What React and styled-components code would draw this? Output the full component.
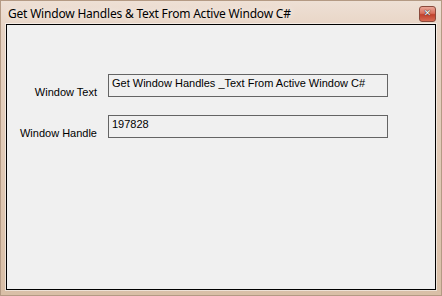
import React from "react";
import styled, { createGlobalStyle } from "styled-components";

const Global = createGlobalStyle`
  html, body { margin: 0; padding: 0; background: #fff; }
`;

const Window = styled.div`
  box-sizing: border-box;
  width: 442px;
  height: 296px;
  display: flex;
  flex-direction: column;
  border: 1px solid #b49a84;
  background: linear-gradient(180deg, #eee0d5 0%, #e7d3c3 30px, #d9bfa7 100%);
  padding: 0 5px 5px;
`;

const TitleBar = styled.div`
  height: 23px;
  display: flex;
  align-items: center;
  justify-content: space-between;
  padding-left: 2px;
`;

const Title = styled.span`
  font-family: "Noto Sans", "Liberation Sans", sans-serif;
  font-size: 12px;
  letter-spacing: -0.2px;
  color: #000;
  text-shadow: 0 0 6px rgba(255, 255, 255, 0.9);
  margin-top: 1px;
`;

const CloseButton = styled.div`
  box-sizing: border-box;
  width: 17px;
  height: 16px;
  margin-top: 2px;
  border: 1px solid #8a4a3c;
  border-radius: 3px;
  background: linear-gradient(180deg, #e9a597 0%, #d9705c 45%, #c0412c 55%, #d66a52 100%);
  display: flex;
  align-items: center;
  justify-content: center;
  color: #fff;
  font-family: "DejaVu Sans", sans-serif;
  font-weight: bold;
  font-size: 9px;
  line-height: 1;
  text-shadow: 0 0 1px #222, 0 0 1px #222;
`;

const Client = styled.div`
  flex: 1;
  border: 1px solid #000;
  box-shadow: 0 0 0 1px rgba(255, 255, 255, 0.55);
  background: #f0f0f0;
  padding-top: 49px;
  display: grid;
  grid-template-columns: 90px 280px;
  column-gap: 11px;
  row-gap: 18px;
  align-content: start;
`;

const Label = styled.div`
  font-family: "Liberation Sans", Arial, sans-serif;
  font-size: 11px;
  line-height: 13px;
  color: #000;
  text-align: right;
  align-self: end;
  margin-bottom: -2px;
`;

const Field = styled.div`
  box-sizing: border-box;
  height: 23px;
  border: 1px solid #646464;
  background: #f0f0f0;
  font-family: "Liberation Sans", Arial, sans-serif;
  font-size: 11px;
  line-height: 13px;
  padding: 2px 0 0 3px;
  color: #000;
  white-space: nowrap;
  overflow: hidden;
`;

export default function App() {
  return (
    <>
      <Global />
      <Window>
        <TitleBar>
          <Title>Get Window Handles &amp; Text From Active Window C#</Title>
          <CloseButton>✕</CloseButton>
        </TitleBar>
        <Client>
          <Label>Window Text</Label>
          <Field>Get Window Handles _Text From Active Window C#</Field>
          <Label>Window Handle</Label>
          <Field>197828</Field>
        </Client>
      </Window>
    </>
  );
}
